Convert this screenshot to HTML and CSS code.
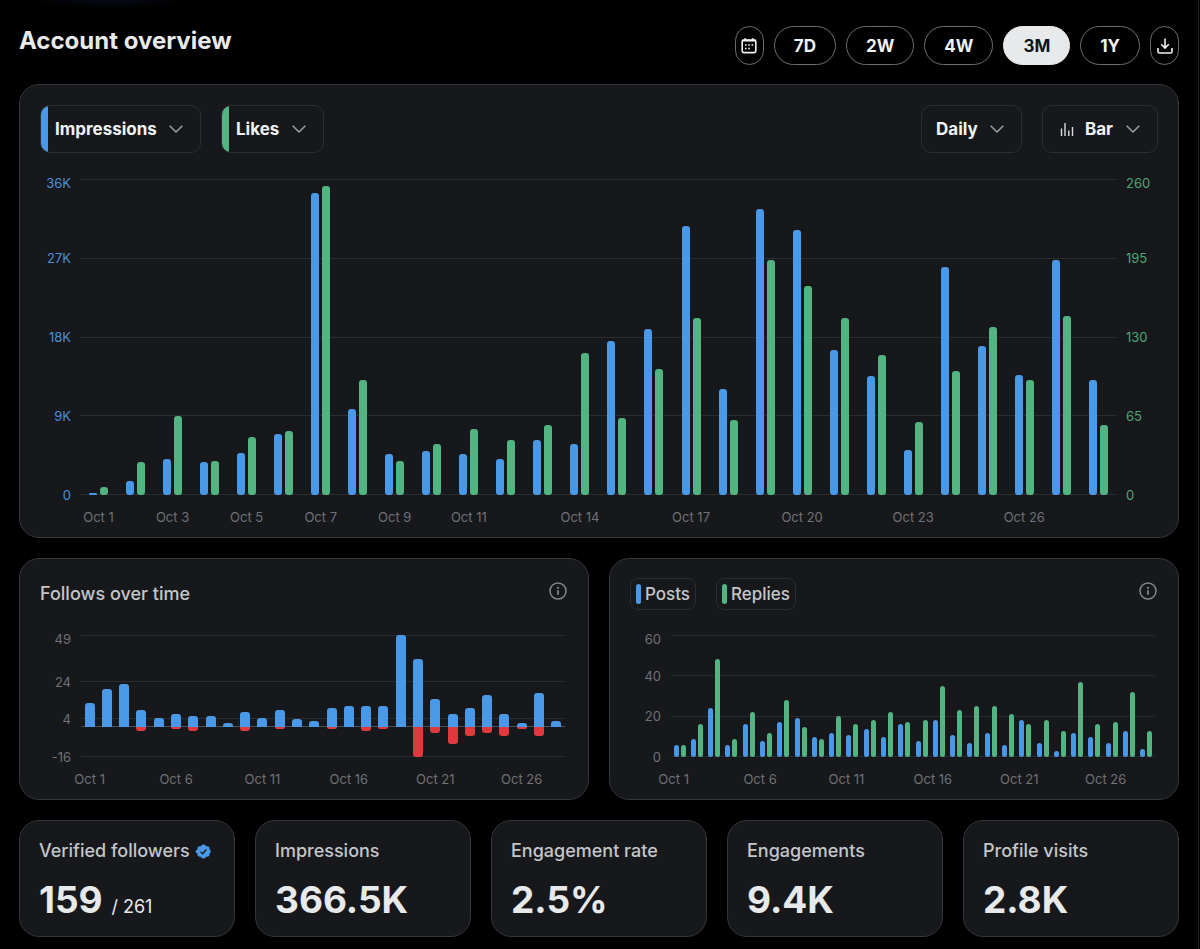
FILE: index.html
```html
<!DOCTYPE html>
<html lang="en">
<head>
    <meta charset="UTF-8">
    <meta name="viewport" content="width=device-width, initial-scale=1">
    <title>Account overview</title>
    <link rel="stylesheet" href="styles.css">
</head>
<body>
    <main class="page">
        <header class="page-header">
            <h1>Account overview</h1>
            <div class="ranges">
                <button type="button" class="range icon-only" aria-label="Pick dates">
                    <svg width="18" height="18" viewBox="0 0 18 18" fill="none" stroke="currentColor" stroke-width="1.6">
                        <rect x="2.2" y="3" width="13.6" height="12.6" rx="1.6"/>
                        <path d="M2.200 3.600h13.600" stroke-width="1.800"/>
                        <path d="M5.200 1.200v2.400M12.800 1.200v2.400" stroke-width="1.800"/>
                        <path d="M4.900 8h1.700M8.200 8h1.700M11.500 8h1.700M4.900 11.500h1.700M8.200 11.500h1.700" stroke-width="1.700"/>
                    </svg>
                </button>
                <button type="button" class="range">7D</button>
                <button type="button" class="range">2W</button>
                <button type="button" class="range">4W</button>
                <button type="button" class="range active">3M</button>
                <button type="button" class="range">1Y</button>
                <button type="button" class="range icon-only" aria-label="Download">
                    <svg width="18" height="18" viewBox="0 0 18 18" fill="none" stroke="currentColor" stroke-width="1.6">
                        <path d="M9 1.500v9.300M5.200 7.200L9 11l3.800-3.800"/>
                        <path d="M2 11v3.600c0 .9.6 1.400 1.400 1.400h11.200c.8 0 1.400-.5 1.400-1.400V11"/>
                    </svg>
                </button>
            </div>
        </header>

        <section class="card">
            <div class="toolbar">
                <label class="dropdown accent-blue">
                    <select aria-label="First metric"><option>Impressions</option></select>
                    <svg class="chevron" width="14" height="8" viewBox="0 0 14 8"><path d="M.7.700l6.300 6.300L13.300.7"/></svg>
                </label>
                <label class="dropdown accent-green">
                    <select aria-label="Second metric"><option>Likes</option></select>
                    <svg class="chevron" width="14" height="8" viewBox="0 0 14 8"><path d="M.7.700l6.300 6.300L13.300.7"/></svg>
                </label>
                <span class="spacer"></span>
                <label class="dropdown">
                    <select aria-label="Interval"><option>Daily</option></select>
                    <svg class="chevron" width="14" height="8" viewBox="0 0 14 8"><path d="M.7.700l6.300 6.300L13.300.7"/></svg>
                </label>
                <label class="dropdown with-icon">
                    <svg class="bar-icon" width="14" height="14" viewBox="0 0 14 14"><path d="M1.500 6.500V14M5 1v13M8.800 8.500V14M12.500 5v9"/></svg>
                    <select aria-label="Chart type"><option>Bar</option></select>
                    <svg class="chevron" width="14" height="8" viewBox="0 0 14 8"><path d="M.7.700l6.300 6.300L13.300.7"/></svg>
                </label>
            </div>
            <div class="chart chart-large" id="overview"></div>
        </section>

        <div class="pair">
            <section class="card">
                <div class="card-header">
                    <h2>Follows over time</h2>
                    <button type="button" class="info" aria-label="About follows">
                        <svg width="18" height="18" viewBox="0 0 18 18"><circle cx="9" cy="9" r="8" fill="none" stroke="currentColor" stroke-width="1.500"/><circle cx="9" cy="5.900" r="1.100" fill="currentColor"/><path d="M8.100 8.200h1.800v4.600H8.100z" fill="currentColor"/></svg>
                    </button>
                </div>
                <div class="chart chart-follows" id="follows"></div>
            </section>
            <section class="card">
                <div class="card-header">
                    <div class="legend">
                        <span class="chip"><i class="blue"></i>Posts</span>
                        <span class="chip"><i class="green"></i>Replies</span>
                    </div>
                    <button type="button" class="info" aria-label="About posts and replies">
                        <svg width="18" height="18" viewBox="0 0 18 18"><circle cx="9" cy="9" r="8" fill="none" stroke="currentColor" stroke-width="1.500"/><circle cx="9" cy="5.900" r="1.100" fill="currentColor"/><path d="M8.100 8.200h1.800v4.600H8.100z" fill="currentColor"/></svg>
                    </button>
                </div>
                <div class="chart chart-posts" id="posts"></div>
            </section>
        </div>

        <div class="stats">
            <section class="card stat">
                <h2>Verified followers
                    <svg class="badge" width="17" height="17" viewBox="0 0 22 22"><path fill="#4a99e9" d="M20.400 11c0-1.200-.7-2.200-1.700-2.700.4-1.100.2-2.300-.6-3.200-.9-.8-2.100-1-3.200-.6C14.400 3.500 13.300 1.800 11 1.800S7.600 3.500 7.100 4.500c-1.100-.4-2.300-.2-3.200.6-.8.9-1 2.100-.6 3.200C2.300 8.800.6 9.800.6 11s1.700 2.200 2.700 2.700c-.4 1.100-.2 2.300.6 3.200.9.8 2.100 1 3.200.6.5 1 1.600 2.700 3.900 2.700s3.400-1.700 3.900-2.700c1.100.4 2.300.2 3.200-.6.8-.9 1-2.100.6-3.200 1-.5 1.700-1.500 1.700-2.700z"/><path d="M7.200 11.200l2.700 2.700 4.800-5.500" fill="none" stroke="#16181c" stroke-width="1.700"/></svg>
                </h2>
                <p class="value">159 <small>/ 261</small></p>
            </section>
            <section class="card stat"><h2>Impressions</h2><p class="value">366.5K</p></section>
            <section class="card stat"><h2>Engagement rate</h2><p class="value">2.5%</p></section>
            <section class="card stat"><h2>Engagements</h2><p class="value">9.4K</p></section>
            <section class="card stat"><h2>Profile visits</h2><p class="value">2.8K</p></section>
        </div>
    </main>
    <script src="charts.js"></script>
</body>
</html>
```
FILE: styles.css
```css
* {
    box-sizing: border-box;
}

body {
    margin: 0;
    background: #000;
    color: #e7e9ea;
    font-family: Inter, "Liberation Sans", sans-serif;
}

.page {
    min-height: 100vh;
    margin-right: 1px;
    padding: 26px 19px 12px;
    border-right: 1px solid #232528;
    background: radial-gradient(ellipse 80px 8px at 110px 0, #070b18, #000) no-repeat;
    background-size: 100% 7px;
}

h1, h2, p {
    margin: 0;
}

/* Header */
.page-header {
    display: flex;
    justify-content: space-between;
    align-items: center;
    margin-bottom: 19px;
}

h1 {
    font-size: 24px;
    line-height: 28px;
    padding-bottom: 10px;
}

.ranges {
    display: flex;
    gap: 10px;
}

.range {
    display: flex;
    align-items: center;
    justify-content: center;
    height: 39px;
    padding: 0 19px;
    border: 1px solid #6a6e72;
    border-radius: 20px;
    background: transparent;
    color: #eff3f4;
    font: 700 17px Inter, "Liberation Sans", sans-serif;
    cursor: pointer;
}

.range.icon-only {
    width: 29px;
    padding: 0;
}

.range.active {
    background: #e7e9ea;
    border-color: #e7e9ea;
    color: #0f1419;
}

/* Cards */
.card {
    padding: 20px 20px 10px;
    border: 1px solid #333639;
    border-radius: 20px;
    background: #17181c;
}

.pair {
    display: grid;
    grid-template-columns: 1fr 1fr;
    gap: 20px;
    margin: 20px 0;
}

.pair .card {
    padding: 19px 20px 10px;
}

.card-header {
    display: flex;
    justify-content: space-between;
    height: 32px;
    margin-bottom: 25px;
}

h2 {
    font-size: 18px;
    line-height: 32px;
    font-weight: 500;
    color: #c4c6c8;
}

.info {
    width: 18px;
    height: 18px;
    margin: 4px 1px 0 0;
    padding: 0;
    border: 0;
    background: none;
    color: #84878a;
    cursor: pointer;
}

.info svg {
    display: block;
}

/* Dropdowns */
.toolbar {
    display: flex;
    gap: 20px;
    margin-bottom: 26px;
}

.spacer {
    flex: 1;
}

.dropdown {
    position: relative;
    display: flex;
    align-items: center;
    height: 48px;
    border: 1px solid #2b2d31;
    border-radius: 10px;
}

.dropdown select {
    appearance: none;
    height: 46px;
    padding: 0 43px 0 14px;
    border: 0;
    background: none;
    color: #eff3f4;
    font: 700 17px Inter, "Liberation Sans", sans-serif;
    cursor: pointer;
}

.dropdown.with-icon select {
    padding-left: 42px;
}

.chevron {
    position: absolute;
    right: 17px;
    fill: none;
    stroke: #a0a3a6;
    stroke-width: 1.4;
    pointer-events: none;
}

.bar-icon {
    position: absolute;
    left: 17px;
    fill: none;
    stroke: #d9dadc;
    stroke-width: 1.4;
    pointer-events: none;
}

.accent-blue {
    background: linear-gradient(to right, #4a99e9 7px, transparent 7px);
}

.accent-green {
    background: linear-gradient(to right, #52b480 7px, transparent 7px);
}

/* Legend chips */
.legend {
    display: flex;
    gap: 20px;
}

.chip {
    display: flex;
    align-items: center;
    gap: 4px;
    padding: 0 5px;
    border: 1px solid #2b2d31;
    border-radius: 8px;
    color: #c4c6c8;
    font-size: 17px;
    font-weight: 500;
}

.chip i {
    width: 5px;
    height: 20px;
    border-radius: 3px;
}

/* Charts */
.chart {
    display: grid;
    grid-template-columns: 31px 1fr;
    column-gap: 10px;
    padding-right: 3px;
    color: #6f7276;
    font-size: 13px;
    line-height: 20px;
}

.chart-large {
    grid-template-columns: 31px 1fr 31px;
    column-gap: 9px;
    padding-right: 1px;
}

.plot {
    display: grid;
    height: 122px;
}

.chart-large .plot {
    height: 316px;
}

.lines,
.bars {
    grid-area: 1 / 1;
    display: flex;
}

.lines,
.scale {
    flex-direction: column;
}

.lines div {
    border-top: 1px solid #2a2c30;
}

.lines .zero {
    border-color: #4b4f54;
}

.scale {
    display: flex;
    text-align: right;
}

.scale div {
    height: 0;
}

.scale span {
    display: block;
    margin-top: -10px;
}

/* the top label hangs a little below its line */
.scale div:first-child span {
    margin-top: -6px;
}

.chart-large .scale.left {
    color: #4a90dc;
}

.scale.right {
    color: #4ea678;
    text-align: left;
}

.slot {
    flex: 1;
    display: flex;
    justify-content: center;
    align-items: flex-end;
    gap: 2px;
}

.bar {
    width: 5px;
    border-radius: 3px;
}

.chart-large .slot {
    gap: 3px;
}

.chart-large .bar {
    width: 8px;
}

.chart-follows .slot {
    flex-direction: column;
    justify-content: flex-start;
    align-items: center;
    gap: 0;
}

.chart-follows .bar {
    width: 10px;
    border-radius: 3px 3px 0 0;
}

.chart-follows .bar.red {
    border-radius: 0 0 3px 3px;
}

.blue {
    background: #4a99e9;
}

.green {
    background: #52b480;
}

.red {
    background: #e0383c;
}

.days {
    grid-column: 2;
    display: flex;
    margin-top: 12px;
}

.days div {
    flex: 1;
    display: flex;
    justify-content: center;
    width: 0;
    white-space: nowrap;
}

.chart-posts .days {
    margin-left: -6px;
    margin-right: 6px;
}

/* Stats */
.stats {
    display: grid;
    grid-template-columns: repeat(5, 1fr);
    gap: 20px;
}

.card.stat {
    padding: 14px 19px 14px;
}

.stat h2 {
    display: flex;
    align-items: center;
    gap: 5px;
    white-space: nowrap;
}

.value {
    margin-top: 11px;
    font-size: 37px;
    line-height: 44px;
    font-weight: 700;
}

.value small {
    font-size: 18px;
    line-height: 20px;
    font-weight: 400;
}
```
FILE: charts.js
```js
const impressions = [270, 1630, 4100, 3720, 4750, 6950, 34350, 9800, 4640, 5050, 4640, 4060, 6310, 5780,
    17560, 18920, 30700, 12120, 32530, 30210, 16570, 13570, 5130, 26030, 16990, 13680, 26790, 13110];
const likes = [7, 27, 65, 28, 48, 53, 254, 95, 28, 42, 54, 45, 58, 117,
    63, 104, 146, 62, 193, 172, 146, 115, 60, 102, 138, 95, 147, 58];
const follows = [13, 20, 23, 9, 5, 7, 6, 6, 2, 8, 5, 9, 4, 3, 10, 11, 11, 11, 49, 36, 15, 7, 10, 17, 7, 2, 18, 3];
const unfollows = [0, 0, 0, 2, 0, 1, 2, 0, 0, 2, 0, 1, 0, 0, 1, 0, 2, 1, 0, 16, 3, 9, 5, 3, 5, 1, 5, 0];
const posts = [6, 9, 24, 6, 16, 8, 17, 19, 10, 12, 11, 14, 10, 16, 8, 18, 11, 7, 12, 6, 18, 7, 3, 12, 10, 7, 13, 4];
const replies = [6, 16, 48, 9, 22, 12, 28, 15, 9, 20, 16, 18, 22, 17, 18, 35, 23, 25, 25, 21, 16, 18, 13, 37, 16, 17, 32, 13];

// every tick takes the share of the height down to the next one
function ticks(values, draw) {
    return values.map((value, i) => {
        const last = i === values.length - 1;
        const next = last ? 0 : value - values[i + 1];
        const zero = !draw && value === 0 && !last;
        return `<div style="flex:${next} 1 0"${zero ? ' class="zero"' : ''}>${draw ? draw(value) : ''}</div>`;
    }).join('');
}

function bar(color, share) {
    return `<div class="bar ${color}" style="height:${(share * 100).toFixed(2)}%"></div>`;
}

function days(labels) {
    let html = '';
    for (let day = 1; day <= 28; day++) {
        html += `<div>${labels.includes(day) ? 'Oct ' + day : ''}</div>`;
    }
    return `<div class="days">${html}</div>`;
}

function chart(id, options) {
    const label = options.label || (v => v);
    let html = `<div class="scale left">${ticks(options.left, v => v === options.hidden ? '' : `<span>${label(v)}</span>`)}</div>`;
    html += `<div class="plot"><div class="lines">${ticks(options.left)}</div><div class="bars">${options.slots.join('')}</div></div>`;
    if (options.right) {
        html += `<div class="scale right">${ticks(options.right, v => `<span>${v}</span>`)}</div>`;
    }
    document.getElementById(id).innerHTML = html + days(options.days);
}

chart('overview', {
    left: [36, 27, 18, 9, 0],
    right: [260, 195, 130, 65, 0],
    label: v => v ? v + 'K' : 0,
    slots: impressions.map((v, i) => `<div class="slot">${bar('blue', v / 36000)}${bar('green', likes[i] / 260)}</div>`),
    days: [1, 3, 5, 7, 9, 11, 14, 17, 20, 23, 26]
});

chart('follows', {
    left: [49, 24, 4, 0, -16],
    hidden: 0,
    slots: follows.map((v, i) => `<div class="slot"><div style="height:${((49 - v) / 65 * 100).toFixed(2)}%"></div>${bar('blue', v / 65)}${bar('red', unfollows[i] / 65)}</div>`),
    days: [1, 6, 11, 16, 21, 26]
});

chart('posts', {
    left: [60, 40, 20, 0],
    slots: posts.map((v, i) => `<div class="slot">${bar('blue', v / 60)}${bar('green', replies[i] / 60)}</div>`),
    days: [1, 6, 11, 16, 21, 26]
});
```
